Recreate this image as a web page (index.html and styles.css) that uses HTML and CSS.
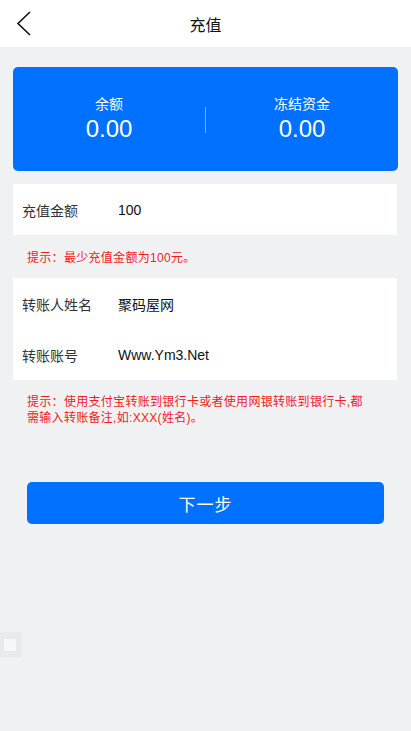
FILE: index.html
```html
<!DOCTYPE html>
<html lang="zh">
<head>
<meta charset="utf-8">
<link rel="stylesheet" href="styles.css">
</head>
<body>
<header class="topbar">
  <span class="back"><svg width="20" height="28" viewBox="0 0 20 28"><polyline points="15,2 3,13.5 15,25" fill="none" stroke="#111" stroke-width="1.6"/></svg></span>
  <h1 class="title">充值</h1>
</header>
<main class="content">
  <section class="balance">
    <div class="bal-item">
      <div class="bal-label">余额</div>
      <div class="bal-value">0.00</div>
    </div>
    <div class="bal-divider"></div>
    <div class="bal-item">
      <div class="bal-label">冻结资金</div>
      <div class="bal-value">0.00</div>
    </div>
  </section>
  <section class="card">
    <div class="row"><span class="row-label">充值金额</span><span class="row-value">100</span></div>
  </section>
  <p class="hint hint-one">提示：最少充值金额为100元。</p>
  <section class="card">
    <div class="row"><span class="row-label">转账人姓名</span><span class="row-value">聚码屋网</span></div>
    <div class="row"><span class="row-label">转账账号</span><span class="row-value">Www.Ym3.Net</span></div>
  </section>
  <p class="hint hint-two">提示：使用支付宝转账到银行卡或者使用网银转账到银行卡,都需输入转账备注,如:XXX(姓名)。</p>
  <button class="next">下一步</button>
</main>
<div class="float-box"><span class="float-inner"></span></div>
</body>
</html>
```
FILE: styles.css
```css
html, body {
  margin: 0;
  padding: 0;
  background: #f0f1f3;
  font-family: "Microsoft YaHei", "Liberation Sans", "Noto Sans CJK SC", sans-serif;
  height: 731px;
  overflow: hidden;
}
.topbar {
  height: 47px;
  background: #fff;
  display: flex;
  align-items: center;
  justify-content: center;
  position: relative;
}
.back {
  position: absolute;
  left: 15px;
  top: 10px;
  width: 20px;
  height: 28px;
}
.back svg { display: block; }
.title {
  margin: 0;
  font-size: 16px;
  font-weight: normal;
  color: #111;
}
.content {
  padding: 20px 13px 0 13px;
  display: flex;
  flex-direction: column;
}
.balance {
  height: 104px;
  background: #0070ff;
  border-radius: 5px;
  display: flex;
  align-items: center;
  color: #fff;
}
.bal-item {
  flex: 1;
  text-align: center;
}
.bal-label {
  font-size: 14px;
  line-height: 20px;
}
.bal-value {
  font-size: 24px;
  line-height: 30px;
}
.bal-divider {
  width: 1px;
  height: 26px;
  background: rgba(255,255,255,0.45);
  margin-top: 2px;
}
.card {
  background: #fff;
  margin-top: 13px;
  margin-right: 1px;
}
.row {
  height: 51px;
  display: flex;
  align-items: center;
  padding-left: 9px;
  font-size: 14px;
}
.row-label {
  width: 96px;
  color: #333;
}
.row-value {
  color: #111;
}
.hint {
  margin: 0;
  padding: 0 14px;
  color: #f21b1b;
  font-size: 12px;
  line-height: 16px;
  letter-spacing: 0.3px;
}
.hint-one {
  padding-top: 15px;
  padding-bottom: 1px;
}
.hint-one + .card { margin-top: 11px; }
.hint-two {
  padding-top: 14px;
  padding-right: 28px;
}
.next {
  margin: 56px 14px 0 14px;
  height: 42px;
  border: none;
  border-radius: 5px;
  background: #0070ff;
  color: #fff;
  font-size: 17px;
  font-family: inherit;
  letter-spacing: 1px;
}
.float-box {
  position: absolute;
  left: 0;
  top: 632px;
  width: 22px;
  height: 25px;
  background: #e9eaec;
  display: flex;
  align-items: center;
  padding-left: 4px;
  box-sizing: border-box;
}
.float-inner {
  width: 12px;
  height: 12px;
  background: #f7f7f8;
}
```
